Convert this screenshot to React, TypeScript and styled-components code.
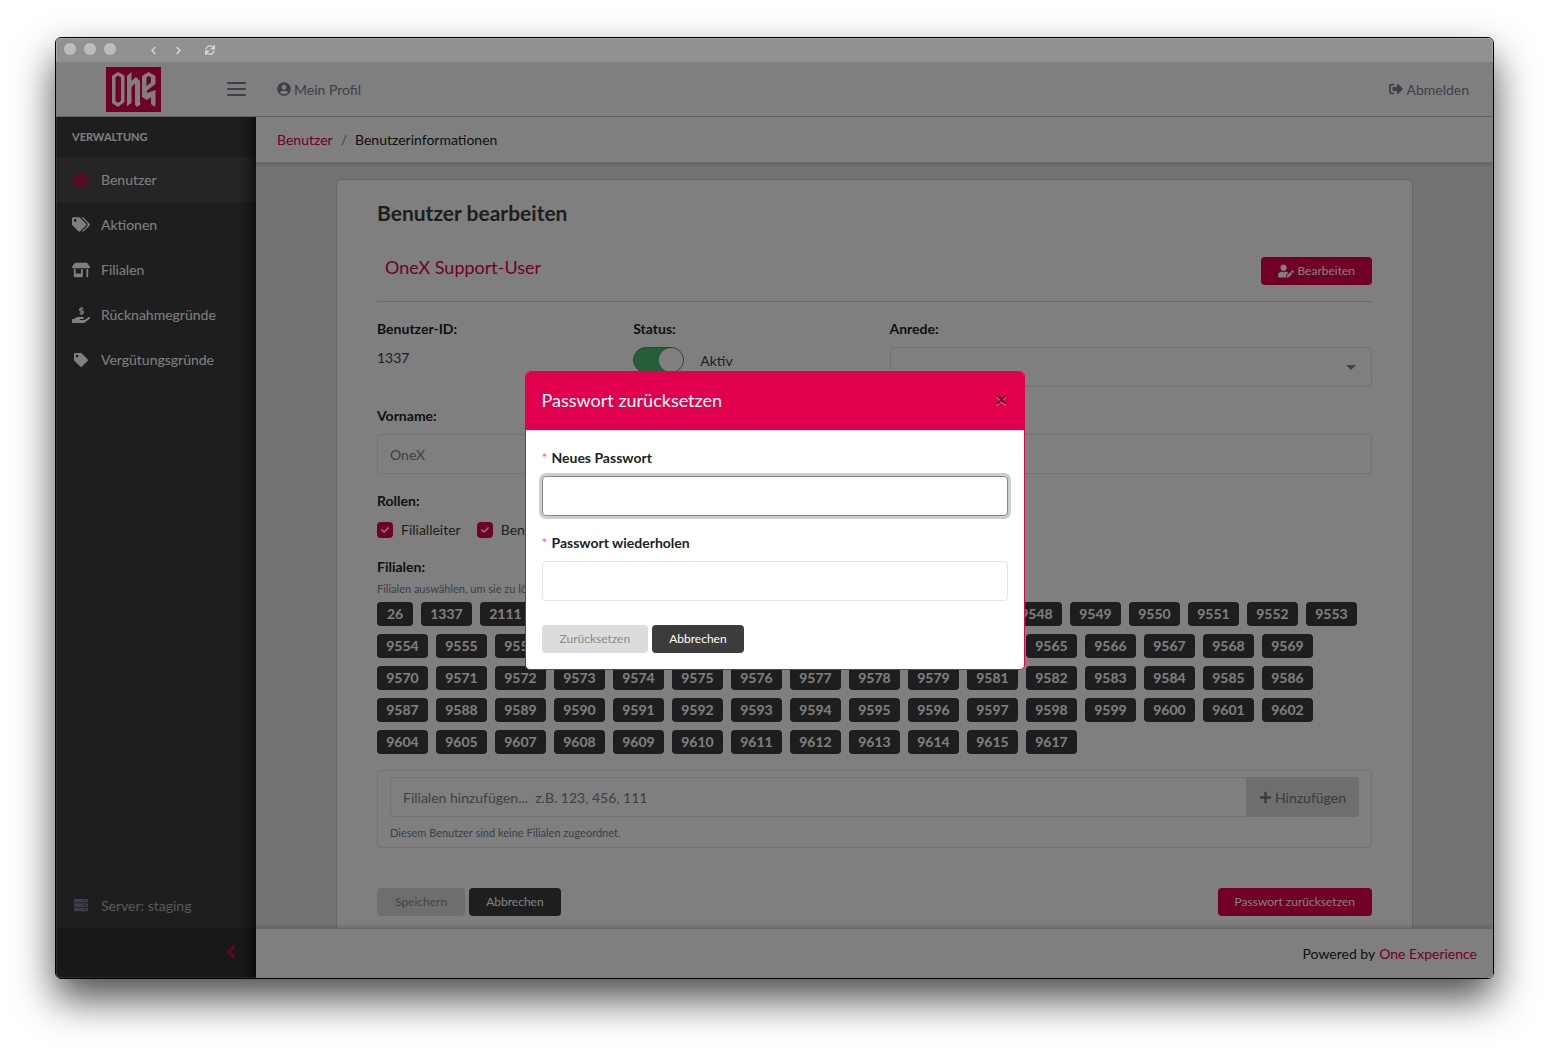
import React from "react";
import styled, { createGlobalStyle, css } from "styled-components";
import {
  FaChevronLeft,
  FaChevronRight,
  FaSync,
  FaUserCircle,
  FaSignOutAlt,
  FaTags,
  FaTag,
  FaStoreAlt,
  FaHandHoldingUsd,
  FaServer,
  FaUserEdit,
  FaPlus,
  FaCheck,
} from "react-icons/fa";

const brand = "#e1004d";
const dark = "#3c3c3c";
const line = "#e4e4e4";
const muted = "#768192";
const ink = "#3c3c3c";

const GlobalStyle = createGlobalStyle`
  *, *::before, *::after { box-sizing: border-box; }
  body {
    margin: 0;
    background: #fff;
    color: ${ink};
    font-family: Lato, "Liberation Sans", sans-serif;
    font-size: 14px;
    line-height: 21px;
  }
  button, input, select { font: inherit; color: inherit; margin: 0; }
  button { cursor: pointer; border: 0; background: none; padding: 0; }
  a { text-decoration: none; color: ${brand}; }
  h1, h2, p, ol, ul { margin: 0; padding: 0; list-style: none; }
  svg { display: block; flex: none; }
`;

const Page = styled.div`
  height: 100vh;
  min-height: 900px;
  padding: 37px 55px 73px;
  display: flex;
`;

const Shadow = styled.div`
  flex: 1;
  min-width: 0;
  display: flex;
  border-radius: 6px;
  box-shadow: 0 20px 40px rgba(0, 0, 0, 0.7);
`;

const Window = styled.div`
  flex: 1;
  min-width: 0;
  display: flex;
  flex-direction: column;
  position: relative;
  border: 1px solid #000;
  border-radius: 6px;
  overflow: hidden;
  &::after {
    content: "";
    position: absolute;
    inset: 0;
    border: 1px solid rgba(255, 255, 255, 0.2);
    border-radius: 5px;
    pointer-events: none;
  }
`;

const TitleBar = styled.div`
  height: 24px;
  flex: none;
  display: flex;
  align-items: center;
  gap: 8px;
  padding: 0 8px 2px;
  background: #909090;
  color: #d8d8d8;
`;

const Dot = styled.span`
  width: 12px;
  height: 12px;
  border-radius: 50%;
  background: #bdbdbd;
`;

const BrowserNav = styled.div`
  display: flex;
  align-items: center;
  gap: 16px;
  margin-left: 25px;
  padding-top: 2px;
  button:last-child { margin-left: 6px; }
`;

const Shell = styled.div`
  flex: 1;
  min-height: 0;
  display: flex;
  flex-direction: column;
  position: relative;
`;

const Header = styled.header`
  flex: none;
  height: 55px;
  display: flex;
  align-items: center;
  background: #fff;
  border-bottom: 1px solid #c8c8c8;
  color: ${muted};
`;

const LogoLink = styled.a`
  width: 155px;
  display: flex;
  justify-content: center;
`;

const Toggler = styled.button`
  width: 50px;
  display: flex;
  flex-direction: column;
  align-items: center;
  gap: 4px;
  span {
    width: 19px;
    height: 2px;
    border-radius: 1px;
    background: ${muted};
  }
`;

const HeaderLink = styled.a<{ $end?: boolean }>`
  display: flex;
  align-items: center;
  gap: 3px;
  color: ${muted};
  margin-left: ${(p) => (p.$end ? "auto" : "16px")};
  margin-right: ${(p) => (p.$end ? "24px" : "0")};
`;

const Body = styled.div`
  flex: 1;
  min-height: 0;
  display: flex;
`;

const Sidebar = styled.nav`
  width: 200px;
  flex: none;
  display: flex;
  flex-direction: column;
  position: relative;
  background: ${dark};
  color: #fff;
  &::after {
    content: "";
    position: absolute;
    inset: 0 0 0 auto;
    width: 18px;
    background: linear-gradient(
      to right,
      rgba(0, 0, 0, 0),
      rgba(0, 0, 0, 0.08) 35%,
      rgba(0, 0, 0, 0.25) 65%,
      rgba(0, 0, 0, 0.5)
    );
    pointer-events: none;
  }
`;

const SideTitle = styled.div`
  height: 40px;
  padding: 0 16px 2px;
  display: flex;
  align-items: center;
  font-size: 11px;
  font-weight: 700;
`;

const SideLink = styled.a<{ $active?: boolean }>`
  height: 45px;
  padding: 0 16px;
  display: flex;
  align-items: center;
  gap: 11px;
  color: #fff;
  background: ${(p) => (p.$active ? "#4a4a4a" : "transparent")};
  svg {
    width: 18px;
    color: ${(p) => (p.$active ? brand : "inherit")};
  }
`;

const ServerInfo = styled.div`
  height: 44px;
  margin-top: auto;
  padding: 0 16px 2px;
  display: flex;
  align-items: center;
  gap: 11px;
  color: #b1b1b1;
  svg {
    width: 18px;
    color: ${muted};
  }
`;

const Minimizer = styled.button`
  height: 50px;
  flex: none;
  padding: 0 17px 2px 0;
  display: flex;
  align-items: center;
  justify-content: flex-end;
  background: #303030;
  color: ${brand};
`;

const Main = styled.div`
  flex: 1;
  min-width: 0;
  display: flex;
  flex-direction: column;
  background: #e4e8e6;
`;

const Breadcrumb = styled.ol`
  height: 46px;
  flex: none;
  padding: 0 21px;
  display: flex;
  align-items: center;
  gap: 8px;
  background: #fff;
  color: #222;
  border-bottom: 1px solid #d0d4d6;
  box-shadow: 0 2px 4px rgba(0, 0, 0, 0.15);
  z-index: 1;
`;

const Separator = styled.li`
  color: ${muted};
`;

const Content = styled.main`
  flex: 1;
  min-height: 0;
  overflow: hidden;
  padding: 16px 80px 0;
`;

const Card = styled.section`
  padding: 20px 40px 40px;
  background: #fff;
  border: 1px solid #c8d0d0;
  border-radius: 5px;
`;

const Heading = styled.h1`
  font-size: 21px;
  line-height: 26px;
  font-weight: 700;
  margin-bottom: 31px;
`;

const CardTop = styled.div`
  display: flex;
  align-items: flex-start;
  justify-content: space-between;
  padding-bottom: 16px;
  margin-bottom: 16px;
  border-bottom: 1px solid #d4d7dc;
`;

const UserName = styled.h2`
  padding-left: 8px;
  font-size: 18px;
  line-height: 20px;
  font-weight: 400;
  color: ${brand};
`;

type Tone = "brand" | "dark" | "disabled";
const Button = styled.button<{ $tone: Tone }>`
  height: 28px;
  padding: 0 16px;
  display: inline-flex;
  align-items: center;
  gap: 3px;
  border: 1px solid transparent;
  border-radius: 4px;
  font-size: 12px;
  line-height: 18px;
  color: #fff;
  background: ${(p) => (p.$tone === "brand" ? brand : dark)};
  ${(p) =>
    p.$tone === "disabled" &&
    css`
      padding: 0 17px;
      color: #8a8a8a;
      background: #dcdcdc;
      cursor: default;
    `}
`;

const Form = styled.form`
  display: flex;
  flex-direction: column;
  gap: 16px;
`;

const Row = styled.div<{ $tall?: boolean }>`
  display: grid;
  grid-template-columns: repeat(4, minmax(0, 1fr));
  column-gap: 30px;
  min-height: ${(p) => (p.$tall ? "71px" : "0")};
`;

const Field = styled.div<{ $span?: number }>`
  grid-column: span ${(p) => p.$span ?? 1};
  min-width: 0;
`;

const Label = styled.label<{ $tight?: boolean }>`
  display: block;
  margin-bottom: ${(p) => (p.$tight ? "4px" : "8px")};
  font-weight: 700;
  color: #222;
`;

const inputStyle = css`
  width: 100%;
  height: 40px;
  padding: 0 12px;
  background: #fff;
  border: 1px solid ${line};
  border-radius: 4px;
  color: ${muted};
  outline: 0;
`;

const Input = styled.input<{ $active?: boolean }>`
  ${inputStyle}
  &::placeholder { color: ${muted}; opacity: 1; }
  ${(p) =>
    p.$active &&
    css`
      border-color: #888;
      box-shadow: 0 0 0 3px #cecece;
    `}
`;

const SelectWrap = styled.div`
  display: grid;
  align-items: center;
  > * { grid-area: 1 / 1; }
  svg { justify-self: end; margin-right: 16px; pointer-events: none; }
`;

const Select = styled.select`
  ${inputStyle}
  appearance: none;
`;

const Inline = styled.div`
  display: flex;
  align-items: center;
  gap: 16px;
`;

const Switch = styled.input`
  appearance: none;
  width: 51px;
  height: 26px;
  border-radius: 13px;
  border: 1px solid #339955;
  background: #4dbd74;
  display: flex;
  justify-content: flex-end;
  &::before {
    content: "";
    width: 24px;
    height: 24px;
    border-radius: 50%;
    background: #fff;
  }
`;

const CheckLabel = styled.label`
  display: flex;
  align-items: center;
  gap: 8px;
`;

const CheckBox = styled.span`
  display: grid;
  place-items: center;
  > * { grid-area: 1 / 1; }
  input {
    appearance: none;
    width: 16px;
    height: 16px;
    border-radius: 4px;
    background: ${brand};
  }
  svg { color: #fff; pointer-events: none; }
`;

const Hint = styled.p`
  font-size: 11px;
  line-height: 16px;
  color: ${muted};
`;

const Chips = styled.ul`
  display: flex;
  flex-wrap: wrap;
  gap: 8px;
  margin-top: 5px;
  padding-right: 12px;
`;

const Chip = styled.button<{ $short: boolean }>`
  display: block;
  width: ${(p) => (p.$short ? 36 : 51)}px;
  height: 24px;
  padding-bottom: 2px;
  border-radius: 4px;
  background: ${dark};
  color: #fff;
  font-weight: 700;
  text-align: center;
`;

const AddPanel = styled.div`
  padding: 6px 12px;
  border: 1px solid ${line};
  border-radius: 4px;
`;

const AddGroup = styled.div`
  display: flex;
  margin-bottom: 8px;
  input { border-radius: 4px 0 0 4px; border-right: 0; }
`;

const AddButton = styled.button`
  flex: none;
  padding: 0 13px;
  display: flex;
  align-items: center;
  gap: 3px;
  border-radius: 0 4px 4px 0;
  background: #dcdcdc;
  color: #777;
`;

const Actions = styled.div`
  display: flex;
  gap: 4px;
  margin-top: 24px;
  > [data-end] { margin-left: auto; }
`;

const Footer = styled.footer`
  height: 50px;
  flex: none;
  padding: 0 16px;
  display: flex;
  align-items: center;
  justify-content: flex-end;
  gap: 4px;
  background: #fff;
  color: #222;
  border-top: 1px solid #c8ced3;
  box-shadow: 0 -2px 4px rgba(0, 0, 0, 0.15);
  z-index: 1;
`;

const Backdrop = styled.div`
  position: absolute;
  inset: 0;
  z-index: 2;
  display: flex;
  align-items: center;
  justify-content: center;
  background: rgba(0, 0, 0, 0.5);
`;

const Dialog = styled.div`
  width: 500px;
  border: 1px solid ${brand};
  border-radius: 5px;
  background: #fff;
  overflow: hidden;
`;

const DialogHeader = styled.div`
  height: 59px;
  padding: 0 16px 2px;
  display: flex;
  align-items: center;
  justify-content: space-between;
  background: ${brand};
  border-bottom: 1px solid #d8dbe0;
`;

const DialogTitle = styled.h2`
  font-size: 18px;
  line-height: 26px;
  font-weight: 400;
  color: #fff;
`;

const Close = styled.button`
  padding-bottom: 2px;
  font-size: 21px;
  line-height: 21px;
  font-weight: 700;
  color: #000;
  opacity: 0.5;
  text-shadow: 0 1px 0 #fff;
`;

const DialogBody = styled.form`
  padding: 16px;
`;

const DialogField = styled.div`
  margin-bottom: 16px;
`;

const Star = styled.span`
  margin-right: 4px;
  font-weight: 400;
  color: #ff6b6b;
`;

const Logo = () => (
  <svg width="55" height="45" viewBox="0 0 55 45" aria-hidden="true">
    <rect width="55" height="45" fill={brand} />
    <g fill="#fff">
      <path d="M6 9 L12 5 L18.500 8.500 V35 L12 40 L6 36 Z M9.500 10.500 V34 L12 36 L15 33.500 V10.500 L12 8.500 Z" fillRule="evenodd" />
      <path d="M21 9 L25.500 5 V14 L30 10 L34 14 V36 L35 37 L31 40 L29 38 V16.500 L25.500 20 V36 L21 39 Z" />
      <path d="M36 9 L42.500 5 L49.500 9 V17 L41 23.500 V26 L49.500 23 V36 L49 40 L45 37 V30 L41 33 L36 30 Z M40.500 10.500 V19 L45 15.500 V10.500 L42.500 9 Z" fillRule="evenodd" />
    </g>
  </svg>
);

const GroupIcon = () => (
  <svg width="18" height="13" viewBox="0 0 18 13" fill="currentColor" aria-hidden="true">
    <circle cx="9" cy="3.500" r="3.200" />
    <path d="M4 12.500v-2.500a2.500 2.500 0 0 1 2.500-2.200h5a2.500 2.500 0 0 1 2.500 2.200v2.500z" />
    <circle cx="2.800" cy="4" r="1.500" />
    <circle cx="15.200" cy="4" r="1.500" />
    <path d="M0 9.500v-1.500a1.800 1.800 0 0 1 1.800-1.700h2.700l.5.700-2 2.500zM18 9.500v-1.500a1.800 1.800 0 0 0-1.800-1.700h-2.700l-.5.700 2 2.500z" />
  </svg>
);

const range = (from: number, to: number) =>
  Array.from({ length: to - from + 1 }, (_, i) => from + i);

const branches = [
  26, 1337, 2111,
  ...range(9540, 9579),
  ...range(9581, 9602),
  9604, 9605,
  ...range(9607, 9615),
  9617,
];

const links = [
  { text: "Benutzer", icon: <GroupIcon /> },
  { text: "Aktionen", icon: <FaTags size={17} /> },
  { text: "Filialen", icon: <FaStoreAlt size={16} /> },
  { text: "Rücknahmegründe", icon: <FaHandHoldingUsd size={16} /> },
  { text: "Vergütungsgründe", icon: <FaTag size={14} /> },
];

export default function App() {
  return (
    <>
      <GlobalStyle />
      <Page>
        <Shadow>
          <Window>
            <TitleBar>
              <Dot />
              <Dot />
              <Dot />
              <BrowserNav>
                <button aria-label="Zurück"><FaChevronLeft size={9} /></button>
                <button aria-label="Vorwärts"><FaChevronRight size={9} /></button>
                <button aria-label="Neu laden"><FaSync size={10} /></button>
              </BrowserNav>
            </TitleBar>
            <Shell>
              <Header>
                <LogoLink href="#" aria-label="One"><Logo /></LogoLink>
                <Toggler aria-label="Menü"><span /><span /><span /></Toggler>
                <HeaderLink href="#"><FaUserCircle size={14} />Mein Profil</HeaderLink>
                <HeaderLink href="#" $end><FaSignOutAlt size={14} />Abmelden</HeaderLink>
              </Header>
              <Body>
                <Sidebar>
                  <SideTitle>VERWALTUNG</SideTitle>
                  {links.map(({ text, icon }, i) => (
                    <SideLink key={text} href="#" $active={i === 0}>
                      {icon}
                      {text}
                    </SideLink>
                  ))}
                  <ServerInfo><FaServer size={14} />Server: staging</ServerInfo>
                  <Minimizer aria-label="Menü einklappen"><FaChevronLeft size={16} /></Minimizer>
                </Sidebar>
                <Main>
                  <Breadcrumb>
                    <li><a href="#">Benutzer</a></li>
                    <Separator>/</Separator>
                    <li>Benutzerinformationen</li>
                  </Breadcrumb>
                  <Content>
                    <Card>
                      <Heading>Benutzer bearbeiten</Heading>
                      <CardTop>
                        <UserName>OneX Support-User</UserName>
                        <Button $tone="brand"><FaUserEdit size={16} />Bearbeiten</Button>
                      </CardTop>
                      <Form>
                        <Row $tall>
                          <Field>
                            <Label as="div">Benutzer-ID:</Label>
                            <p>1337</p>
                          </Field>
                          <Field>
                            <Label htmlFor="status">Status:</Label>
                            <Inline>
                              <Switch id="status" type="checkbox" role="switch" defaultChecked />
                              <span>Aktiv</span>
                            </Inline>
                          </Field>
                          <Field $span={2}>
                            <Label htmlFor="anrede">Anrede:</Label>
                            <SelectWrap>
                              <Select id="anrede" defaultValue=""><option value="" /></Select>
                              <svg width="10" height="5" viewBox="0 0 10 5"><path d="M0 0h10L5 5z" fill="#888" /></svg>
                            </SelectWrap>
                          </Field>
                        </Row>
                        <Row>
                          <Field $span={2}>
                            <Label htmlFor="vorname">Vorname:</Label>
                            <Input id="vorname" defaultValue="OneX" />
                          </Field>
                          <Field $span={2}>
                            <Label htmlFor="nachname">Nachname:</Label>
                            <Input id="nachname" />
                          </Field>
                        </Row>
                        <div>
                          <Label as="div">Rollen:</Label>
                          <Inline>
                            {["Filialleiter", "Benutzer"].map((role) => (
                              <CheckLabel key={role}>
                                <CheckBox>
                                  <input type="checkbox" defaultChecked />
                                  <FaCheck size={8} />
                                </CheckBox>
                                {role}
                              </CheckLabel>
                            ))}
                          </Inline>
                        </div>
                        <div>
                          <Label as="div" $tight>Filialen:</Label>
                          <Hint>Filialen auswählen, um sie zu löschen.</Hint>
                          <Chips>
                            {branches.map((n) => (
                              <li key={n}><Chip type="button" $short={n < 100}>{n}</Chip></li>
                            ))}
                          </Chips>
                        </div>
                        <AddPanel>
                          <AddGroup>
                            <Input aria-label="Filialen hinzufügen" placeholder={"Filialen hinzufügen...\u00a0 z.B. 123, 456, 111"} />
                            <AddButton type="button"><FaPlus size={13} />Hinzufügen</AddButton>
                          </AddGroup>
                          <Hint>Diesem Benutzer sind keine Filialen zugeordnet.</Hint>
                        </AddPanel>
                        <Actions>
                          <Button type="button" $tone="disabled">Speichern</Button>
                          <Button type="button" $tone="dark">Abbrechen</Button>
                          <Button type="button" $tone="brand" data-end>Passwort zurücksetzen</Button>
                        </Actions>
                      </Form>
                    </Card>
                  </Content>
                  <Footer>
                    Powered by <a href="#">One Experience</a>
                  </Footer>
                </Main>
              </Body>
              <Backdrop>
                <Dialog role="dialog" aria-modal="true" aria-labelledby="dialog-title">
                  <DialogHeader>
                    <DialogTitle id="dialog-title">Passwort zurücksetzen</DialogTitle>
                    <Close aria-label="Schließen">×</Close>
                  </DialogHeader>
                  <DialogBody>
                    <DialogField>
                      <Label htmlFor="pw1"><Star>*</Star>Neues Passwort</Label>
                      <Input id="pw1" type="password" $active />
                    </DialogField>
                    <DialogField>
                      <Label htmlFor="pw2"><Star>*</Star>Passwort wiederholen</Label>
                      <Input id="pw2" type="password" />
                    </DialogField>
                    <Actions>
                      <Button type="button" $tone="disabled">Zurücksetzen</Button>
                      <Button type="button" $tone="dark">Abbrechen</Button>
                    </Actions>
                  </DialogBody>
                </Dialog>
              </Backdrop>
            </Shell>
          </Window>
        </Shadow>
      </Page>
    </>
  );
}
